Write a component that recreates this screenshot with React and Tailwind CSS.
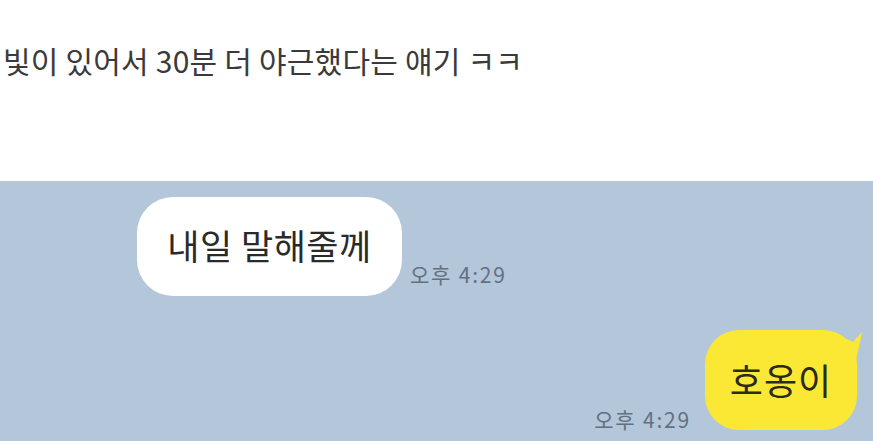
export default function App() {
  const font = { fontFamily: '"Noto Sans CJK KR", "Noto Sans", sans-serif' };
  return (
    <div className="w-[873px] h-[441px] overflow-hidden flex flex-col" style={font}>
      <div className="h-[181px] bg-white pl-[3px] pt-[40px] shrink-0">
        <p className="text-[30px] leading-[40px] text-[#3a3a3a] tracking-[0.2px] whitespace-nowrap">빛이 있어서 30분 더 야근했다는 얘기 ㅋㅋ</p>
      </div>
      <div className="flex-1 bg-[#b3c6da] flex flex-col pt-[16px]">
        <div className="flex items-end pl-[137px] gap-[8px]">
          <div className="w-[265px] h-[99px] bg-white rounded-[36px] flex items-center justify-center">
            <span className="text-[35px] text-[#2a2a2a] tracking-[0.5px] -mt-[2px] whitespace-nowrap">내일 말해줄께</span>
          </div>
          <span className="text-[21px] text-[#627082] mb-[11px] leading-none tracking-[1.8px] whitespace-nowrap">오후 4:29</span>
        </div>
        <div className="flex items-end justify-end pr-[16px] gap-[14px] mt-[34px]">
          <span className="text-[21px] text-[#627082] mb-0 leading-none tracking-[1.8px] whitespace-nowrap">오후 4:29</span>
          <div className="relative w-[152px] h-[100px] bg-[#fbe835] rounded-[34px] flex items-center justify-center">
            <span className="text-[36px] text-[#2a2a1a] tracking-[1px] -mt-[2px] whitespace-nowrap">호옹이</span>
            <svg className="absolute -right-[6px] top-0" width="30" height="34" viewBox="0 0 30 34">
              <path d="M0 6 Q14 8 20 12 L29 2 Q26 18 22 34 L0 34 Z" fill="#fbe835" />
            </svg>
          </div>
        </div>
      </div>
    </div>
  );
}
